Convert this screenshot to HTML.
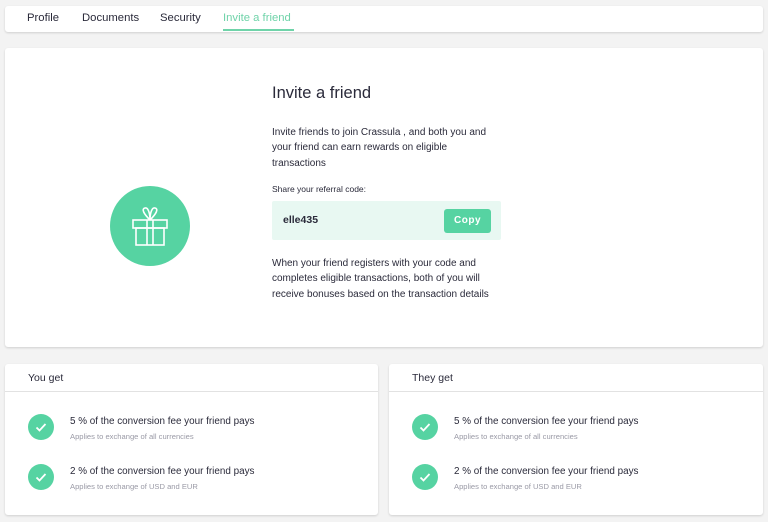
<!DOCTYPE html>
<html><head><style>
*{margin:0;padding:0;box-sizing:border-box}
body{width:768px;height:522px;background:#f3f3f3;font-family:"Liberation Sans",sans-serif;color:#2a2a3a;position:relative;overflow:hidden}
.card{position:absolute;background:#fff;border-radius:3px;box-shadow:0 1px 2px rgba(0,0,0,.15)}
.abs{position:absolute;white-space:nowrap}
.nav span{position:absolute;top:6px;font-size:11.3px;color:#2a2a3a}
.p{font-size:10px;line-height:15.3px;color:#2a2a3a}
.chk{position:absolute;width:26px;height:26px;border-radius:50%;background:#56d3a2}
.t1{font-size:9.9px;color:#2a2a3a}
.t2{font-size:7.6px;color:#9a9aa6}
</style></head><body>
<div class="card nav" style="left:5px;top:6px;width:758px;height:26px">
<span style="left:22px">Profile</span>
<span style="left:77px">Documents</span>
<span style="left:155px">Security</span>
<span style="left:218px;color:#6fd3a9">Invite a friend</span>
<div style="position:absolute;left:218px;top:23px;width:71px;height:2px;background:#6fd3a9"></div>
</div>
<div class="card" style="left:5px;top:48px;width:758px;height:299px">
<div style="position:absolute;left:105px;top:138px;width:80px;height:80px;border-radius:50%;background:#56d3a2">
<svg width="80" height="80" viewBox="0 0 80 80" fill="none" stroke="#fff" stroke-width="1.6">
<rect x="23" y="34" width="34" height="8"/><rect x="26" y="42" width="28" height="17"/>
<line x1="37" y1="34" x2="37" y2="59"/><line x1="43" y1="34" x2="43" y2="59"/>
<path d="M40 34 C34 28 31 23 35 22 C38 21 40 27 40 34 C40 27 42 21 45 22 C49 23 46 28 40 34"/>
</svg></div>
<div class="abs" style="left:267px;top:36px;font-size:16.5px">Invite a friend</div>
<div class="abs p" style="left:267px;top:77px">Invite friends to join Crassula , and both you and<br>your friend can earn rewards on eligible<br>transactions</div>
<div class="abs" style="left:267px;top:136px;font-size:8.5px">Share your referral code:</div>
<div style="position:absolute;left:267px;top:153px;width:229px;height:39px;background:#e8f8f2;border-radius:2px">
<div class="abs" style="left:11px;top:13px;font-size:10.5px;font-weight:bold">elle435</div>
<div style="position:absolute;left:172px;top:8px;width:47px;height:24px;background:#56d3a2;border-radius:3px;color:#fff;font-size:10px;font-weight:bold;text-align:center;line-height:24px;letter-spacing:.5px">Copy</div>
</div>
<div class="abs p" style="left:267px;top:208px">When your friend registers with your code and<br>completes eligible transactions, both of you will<br>receive bonuses based on the transaction details</div>
</div>
<div class="card" style="left:5px;top:364px;width:373px;height:151px">
<div class="abs" style="left:23px;top:8px;font-size:10.5px">You get</div>
<div style="position:absolute;left:0;top:27px;width:100%;height:1px;background:#e2e2e2"></div>
<div class="chk" style="left:23px;top:50px"><svg width="26" height="26"><path d="M8.5 13.5l3 3 6-6.5" stroke="#fff" stroke-width="1.8" fill="none"/></svg></div>
<div class="abs t1" style="left:65px;top:52px">5 % of the conversion fee your friend pays</div>
<div class="abs t2" style="left:65px;top:68px">Applies to exchange of all currencies</div>
<div class="chk" style="left:23px;top:100px"><svg width="26" height="26"><path d="M8.5 13.5l3 3 6-6.5" stroke="#fff" stroke-width="1.8" fill="none"/></svg></div>
<div class="abs t1" style="left:65px;top:102px">2 % of the conversion fee your friend pays</div>
<div class="abs t2" style="left:65px;top:118px">Applies to exchange of USD and EUR</div>
</div>
<div class="card" style="left:389px;top:364px;width:374px;height:151px">
<div class="abs" style="left:23px;top:8px;font-size:10.5px">They get</div>
<div style="position:absolute;left:0;top:27px;width:100%;height:1px;background:#e2e2e2"></div>
<div class="chk" style="left:23px;top:50px"><svg width="26" height="26"><path d="M8.5 13.5l3 3 6-6.5" stroke="#fff" stroke-width="1.8" fill="none"/></svg></div>
<div class="abs t1" style="left:65px;top:52px">5 % of the conversion fee your friend pays</div>
<div class="abs t2" style="left:65px;top:68px">Applies to exchange of all currencies</div>
<div class="chk" style="left:23px;top:100px"><svg width="26" height="26"><path d="M8.5 13.5l3 3 6-6.5" stroke="#fff" stroke-width="1.8" fill="none"/></svg></div>
<div class="abs t1" style="left:65px;top:102px">2 % of the conversion fee your friend pays</div>
<div class="abs t2" style="left:65px;top:118px">Applies to exchange of USD and EUR</div>
</div>
</body></html>
